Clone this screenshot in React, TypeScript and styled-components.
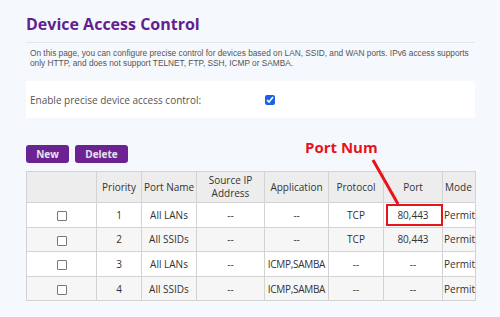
import styled, { createGlobalStyle } from "styled-components";

const GlobalStyle = createGlobalStyle`
  html, body {
    margin: 0;
    padding: 0;
    background: #f5f8fc;
  }
  body {
    font-family: "Open Sans", "Noto Sans", sans-serif;
  }
`;

const rows = [
  { priority: 1, port: "All LANs", src: "--", app: "--", proto: "TCP", num: "80,443", mode: "Permit" },
  { priority: 2, port: "All SSIDs", src: "--", app: "--", proto: "TCP", num: "80,443", mode: "Permit" },
  { priority: 3, port: "All LANs", src: "--", app: "ICMP,SAMBA", proto: "--", num: "--", mode: "Permit" },
  { priority: 4, port: "All SSIDs", src: "--", app: "ICMP,SAMBA", proto: "--", num: "--", mode: "Permit" },
];

const columns = [70, 45, 55, 68, 64, 55, 59, 33];

export default function App() {
  return (
    <>
      <GlobalStyle />
      <Page>
        <Title>Device Access Control</Title>
        <Description>
          On this page, you can configure precise control for devices based on LAN, SSID, and WAN ports. IPv6 access supports
          only HTTP, and does not support TELNET, FTP, SSH, ICMP or SAMBA.
        </Description>
        <Panel>
          <Label>Enable precise device access control:</Label>
          <Check type="checkbox" defaultChecked />
        </Panel>
        <Toolbar>
          <Button>New</Button>
          <Button>Delete</Button>
        </Toolbar>
        <Table>
          <colgroup>
            {columns.map((w, i) => (
              <col key={i} style={{ width: w }} />
            ))}
          </colgroup>
          <thead>
            <tr>
              <Th></Th>
              <Th>Priority</Th>
              <Th>Port Name</Th>
              <Th>
                Source IP
                <br />
                Address
              </Th>
              <Th>Application</Th>
              <Th>Protocol</Th>
              <Th>Port</Th>
              <Th $left>Mode</Th>
            </tr>
          </thead>
          <tbody>
            {rows.map((r, i) => (
              <Row key={r.priority} $alt={i % 2 === 1}>
                <Td>
                  <RowBox />
                </Td>
                <Td>{r.priority}</Td>
                <Td>{r.port}</Td>
                <Td>{r.src}</Td>
                <Td $tight>{r.app}</Td>
                <Td>{r.proto}</Td>
                <Td>{r.num}</Td>
                <Td $left>{r.mode}</Td>
              </Row>
            ))}
          </tbody>
        </Table>

        <Callout>Port Num</Callout>
        <Arrow width="500" height="317" viewBox="0 0 500 317">
          <line x1="373" y1="160" x2="398" y2="204" stroke="#e8141c" strokeWidth="3" />
        </Arrow>
        <Highlight />
      </Page>
    </>
  );
}

const Page = styled.div`
  position: relative;
  width: 449px;
  height: 317px;
  padding: 0 25px 0 26px;
  overflow: hidden;
`;

const Title = styled.h1`
  margin: 0;
  padding-top: 13px;
  height: 29px;
  font-size: 16px;
  font-weight: 700;
  color: #641f8e;
  border-bottom: 1px solid #e2e5ea;
  line-height: 22px;
`;

const Description = styled.p`
  margin: 0;
  padding: 5px 0 0 4px;
  height: 33px;
  font-family: "Liberation Sans", Arial, sans-serif;
  font-size: 8.3px;
  line-height: 10px;
  color: #555;
`;

const Panel = styled.div`
  display: flex;
  align-items: center;
  height: 37px;
  background: #fff;
  padding-left: 4px;
`;

const Label = styled.span`
  width: 235px;
  font-size: 10px;
  color: #555;
`;

const Check = styled.input`
  margin: 0;
  width: 10px;
  height: 10px;
  accent-color: #1a62e8;
`;

const Toolbar = styled.div`
  display: flex;
  gap: 6px;
  margin-top: 27px;
  height: 18px;
`;

const Button = styled.button`
  height: 18px;
  padding: 0 10px;
  border: none;
  border-radius: 3px;
  background: #6b2391;
  color: #e8e2ee;
  font-family: "Open Sans", sans-serif;
  font-size: 10px;
  font-weight: 700;
  &:first-child {
    width: 43px;
  }
  &:last-child {
    width: 53px;
  }
`;

const Table = styled.table`
  margin-top: 8px;
  width: 449px;
  table-layout: fixed;
  border-collapse: collapse;
  font-size: 10px;
  color: #333;
  border: 1px solid #d3d3d3;
`;

const Th = styled.th<{ $left?: boolean }>`
  height: 30px;
  padding: 0;
  font-weight: 400;
  background: #ededed;
  border: 1px solid #d3d3d3;
  line-height: 13px;
  text-align: ${(p) => (p.$left ? "left" : "center")};
  padding-left: ${(p) => (p.$left ? "2px" : "0")};
  white-space: nowrap;
  overflow: hidden;
`;

const Row = styled.tr<{ $alt: boolean }>`
  background: ${(p) => (p.$alt ? "#f6f6f6" : "#fff")};
`;

const Td = styled.td<{ $left?: boolean; $tight?: boolean }>`
  height: 23.6px;
  padding: 0;
  border: 1px solid #d3d3d3;
  text-align: ${(p) => (p.$left ? "left" : "center")};
  padding-left: ${(p) => (p.$left ? "1px" : "0")};
  letter-spacing: ${(p) => (p.$tight ? "-0.3px" : "0")};
  white-space: nowrap;
  overflow: hidden;
`;

const RowBox = styled.span`
  display: inline-block;
  width: 8px;
  height: 8px;
  border: 1px solid #777;
  border-radius: 1px;
  background: #fff;
  vertical-align: middle;
`;

const Callout = styled.div`
  position: absolute;
  left: 305px;
  top: 137px;
  font-size: 15px;
  font-weight: 700;
  color: #e8141c;
`;

const Arrow = styled.svg`
  position: absolute;
  left: 0;
  top: 0;
  pointer-events: none;
`;

const Highlight = styled.div`
  position: absolute;
  left: 386px;
  top: 204px;
  width: 53px;
  height: 18px;
  border: 2px solid #e8141c;
`;
